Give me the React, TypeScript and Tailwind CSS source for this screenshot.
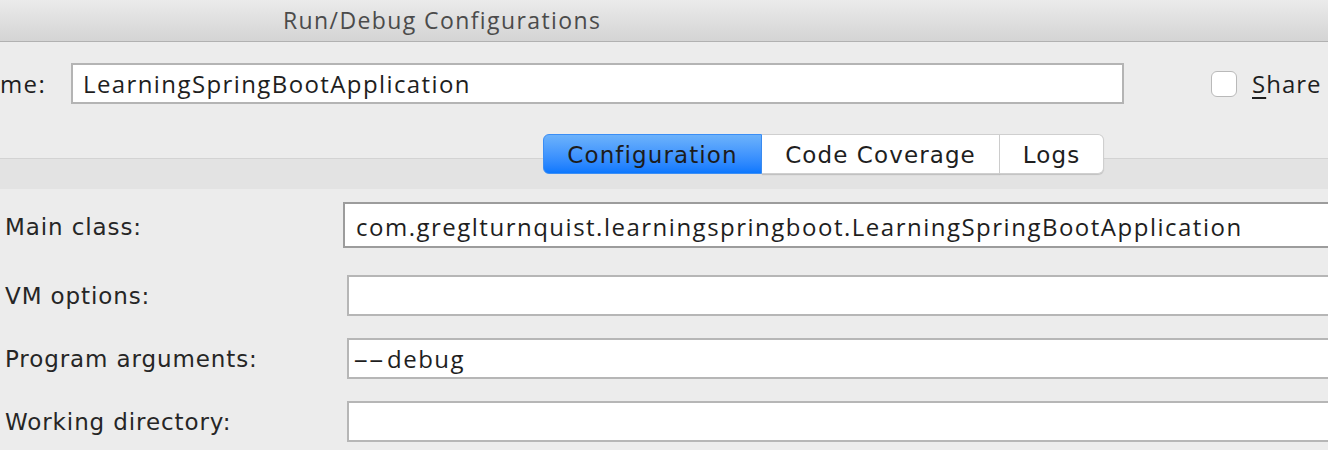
const LABEL_FONT = "font-['DejaVu_Sans',sans-serif]";
const FIELD_FONT = "font-['Open_Sans',sans-serif]";

const rows = [
  { label: "VM options:", dash: "", value: "", top: "mt-[27px]" },
  { label: "Program arguments:", dash: "--", value: "debug", top: "mt-[22px]" },
  { label: "Working directory:", dash: "", value: "", top: "mt-[22px]" },
];

export default function App() {
  return (
    <div className="w-[1328px] h-[450px] overflow-hidden bg-[#ececec] text-[#1e1e1e]">
      {/* Window title bar */}
      <div className="h-[42px] flex items-center pl-[283px] bg-gradient-to-b from-[#ebebeb] to-[#d4d4d4] border-b border-[#b1b1b1]">
        <span className={`${FIELD_FONT} text-[23px] tracking-[1.4px] text-[#4b4b4b] leading-none`}>Run/Debug Configurations</span>
      </div>

      {/* Name row */}
      <div className="flex items-center h-[41px] mt-[21px]">
        <span className={`${FIELD_FONT} text-[24px] tracking-[1.4px] w-[71px] shrink-0`}>me:</span>
        <div className="w-[1053px] h-[41px] bg-white border-2 border-[#b4b4b4] flex items-center pl-[10px]">
          <span className={`${FIELD_FONT} text-[24px] tracking-[1.4px]`}>LearningSpringBootApplication</span>
        </div>
        <div className="ml-[87px] w-[26px] h-[26px] rounded-[6px] bg-white border border-[#b9b9b9]" />
        <span className={`${FIELD_FONT} text-[24px] tracking-[1px] ml-[15px]`}>
          <span className="underline underline-offset-4">S</span>hare
        </span>
      </div>

      {/* Tabs */}
      <div className="relative z-10 flex mt-[30px] ml-[543px] h-[40px] w-[561px]">
        <div className={`${LABEL_FONT} w-[219px] flex items-center justify-center pt-[2px] text-[23px] tracking-[1.1px] text-[#1c1c1c] rounded-l-[6px] bg-gradient-to-b from-[#6cb2fb] to-[#0b78fe] border border-[#3b8ef5]`}>
          Configuration
        </div>
        <div className={`${LABEL_FONT} w-[238px] flex items-center justify-center pt-[2px] text-[23px] tracking-[1.1px] bg-white border-y border-r border-[#cfcfcf] shadow-[0_1px_1px_rgba(0,0,0,0.15)]`}>
          Code Coverage
        </div>
        <div className={`${LABEL_FONT} w-[104px] flex items-center justify-center pt-[2px] text-[23px] tracking-[1.1px] bg-white border-y border-r border-[#cfcfcf] rounded-r-[6px] shadow-[0_1px_1px_rgba(0,0,0,0.15)]`}>
          Logs
        </div>
      </div>
      <div className="-mt-[16px] h-[31px] bg-[#e3e3e3] border-t border-[#d3d3d3]" />

      {/* Form */}
      <div className={`${LABEL_FONT} text-[23px] tracking-[0.9px] text-[#262626]`}>
        <div className="flex items-center mt-[13px] h-[46px]">
          <span className="w-[343px] shrink-0 pl-[5px] pt-[4px]">Main class:</span>
          <div className="flex-1 h-[46px] bg-white border-2 border-[#9c9c9c] border-r-0 flex items-center pl-[11px] pt-[3px]">
            <span className={`${FIELD_FONT} text-[24px] tracking-[1.5px] text-[#1e1e1e] whitespace-nowrap`}>com.greglturnquist.learningspringboot.LearningSpringBootApplication</span>
          </div>
        </div>
        {rows.map((r) => (
          <div key={r.label} className={`flex items-center h-[41px] ${r.top}`}>
            <span className="w-[347px] shrink-0 pl-[5px] pt-[2px]">{r.label}</span>
            <div className="flex-1 h-[41px] bg-white border-2 border-[#b6b6b6] border-r-0 flex items-center pl-[4px]">
              <span className={`${FIELD_FONT} text-[24px] tracking-[1.5px] text-[#1e1e1e] whitespace-nowrap`}>
                {r.dash && (
                  <span className="inline-block w-[34px]">
                    <span className="inline-block origin-left scale-x-[2] tracking-normal">{r.dash}</span>
                  </span>
                )}
                {r.value}
              </span>
            </div>
          </div>
        ))}
      </div>
    </div>
  );
}
